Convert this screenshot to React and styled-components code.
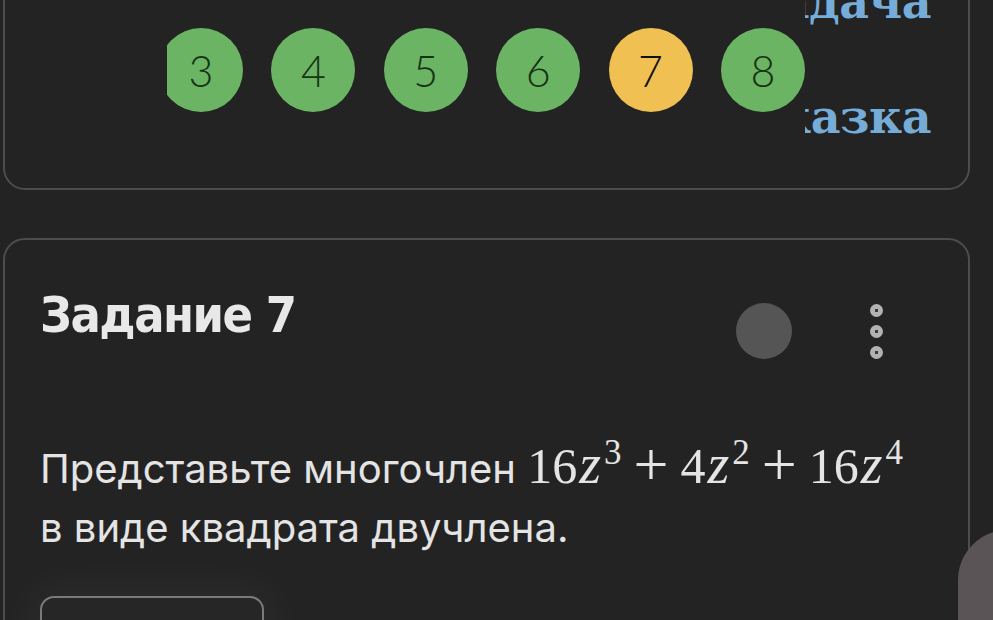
import React from 'react';
import styled, { createGlobalStyle } from 'styled-components';

const GlobalStyle = createGlobalStyle`
  html, body {
    margin: 0;
    padding: 0;
    background: #232323;
    overflow: hidden;
  }
  body {
    font-family: Inter, Roboto, "Noto Sans", sans-serif;
  }
`;

const Page = styled.div`
  position: relative;
  width: 993px;
  height: 620px;
  overflow: hidden;
  background: #232323;
`;

const Card = styled.section`
  box-sizing: border-box;
  width: 967px;
  margin-left: 3px;
  border: 2px solid #4d4d4d;
  border-radius: 22px;
  background: #232323;
`;

const NavCard = styled(Card)`
  display: flex;
  height: 244px;
  margin-top: -54px;
  padding: 0 37px 0 162px;
`;

const Strip = styled.div`
  width: 638px;
  height: 84px;
  margin-top: 80px;
  overflow: hidden;
  flex-shrink: 0;
`;

const Track = styled.div`
  display: flex;
  gap: 28.4px;
  margin-left: -8px;
`;

const Step = styled.div`
  flex-shrink: 0;
  width: 84px;
  height: 84px;
  border-radius: 50%;
  background: ${p => (p.current ? '#f0c152' : '#6bb463')};
  color: ${p => (p.current ? '#111' : '#173316')};
  display: flex;
  align-items: center;
  justify-content: center;
  font-family: Lato, Roboto, sans-serif;
  font-weight: 300;
  font-size: 43px;
`;

const Links = styled.div`
  flex: 1;
  min-width: 0;
  overflow: hidden;
  display: flex;
  flex-direction: column;
  align-items: flex-end;
  padding-top: 31px;
  gap: 69px;
`;

const Link = styled.a`
  font-family: "DejaVu Serif", "Liberation Serif", serif;
  font-weight: 700;
  font-size: 46px;
  line-height: 46px;
  color: #76acd8;
  white-space: nowrap;
  letter-spacing: -0.5px;
`;

const TaskCard = styled(Card)`
  margin-top: 48px;
  height: 420px;
  padding: 0 35px;
`;

const Header = styled.div`
  display: flex;
  align-items: flex-start;
  padding-top: 42px;
`;

const Title = styled.h2`
  flex: 1;
  margin: 0;
  font-family: "DejaVu Sans Condensed", "DejaVu Sans", sans-serif;
  font-stretch: condensed;
  font-weight: 700;
  font-size: 50px;
  letter-spacing: -1.5px;
  line-height: 66px;
  color: #e8e8e8;
`;

const Avatar = styled.div`
  width: 56px;
  height: 56px;
  border-radius: 50%;
  background: #555555;
  margin-right: 60px;
  margin-top: 21px;
`;

const Kebab = styled.button`
  width: 48px;
  height: 64px;
  margin-right: 33px;
  margin-top: 17px;
  padding: 0;
  border: none;
  background: transparent;
  display: flex;
  flex-direction: column;
  align-items: center;
  justify-content: center;
  gap: 8px;
`;

const Dot = styled.span`
  box-sizing: border-box;
  width: 13px;
  height: 13px;
  border-radius: 50%;
  background: radial-gradient(circle, #3a3a3a 0 1.5px, #b2b2b2 2px);
`;

const Statement = styled.p`
  margin: 76px 0 0 0;
  font-size: 40px;
  line-height: 59px;
  color: #e4e4e4;
`;

const Math = styled.span`
  font-family: "Liberation Serif", "DejaVu Serif", serif;
  font-size: 50px;
  line-height: 0;
  white-space: nowrap;
`;

const Var = styled.i`
  font-style: italic;
  font-size: 56px;
  margin: 0 3px 0 2px;
`;

const Sup = styled.sup`
  font-size: 35px;
  line-height: 0;
  vertical-align: 0;
  position: relative;
  top: -19px;
`;

const Op = styled.span`
  font-size: 62px;
  line-height: 0;
  margin: 0 12px;
  position: relative;
  top: 2px;
`;

const AnswerButton = styled.button`
  display: block;
  width: 224px;
  height: 80px;
  margin-top: 39px;
  border: 2px solid #7a7a7a;
  border-radius: 14px;
  background: #262626;
  box-shadow: 0 0 40px 14px rgba(255, 255, 255, 0.035);
`;

const Floating = styled.div`
  position: absolute;
  left: 958px;
  top: 530px;
  width: 120px;
  height: 160px;
  border-radius: 50px;
  background: #5a5457;
`;

const steps = [3, 4, 5, 6, 7, 8];

export default function App() {
  return (
    <Page>
      <GlobalStyle />
      <NavCard>
        <Strip>
          <Track>
            {steps.map(n => (
              <Step key={n} current={n === 7}>{n}</Step>
            ))}
          </Track>
        </Strip>
        <Links>
          <Link>Задача</Link>
          <Link>Подсказка</Link>
        </Links>
      </NavCard>
      <TaskCard>
        <Header>
          <Title>Задание 7</Title>
          <Avatar />
          <Kebab>
            <Dot />
            <Dot />
            <Dot />
          </Kebab>
        </Header>
        <Statement>
          Представьте многочлен{' '}
          <Math>
            16<Var>z</Var><Sup>3</Sup>
            <Op>+</Op>4<Var>z</Var><Sup>2</Sup>
            <Op>+</Op>16<Var>z</Var><Sup>4</Sup>
          </Math>
          <br />
          в виде квадрата двучлена.
        </Statement>
        <AnswerButton />
      </TaskCard>
      <Floating />
    </Page>
  );
}
